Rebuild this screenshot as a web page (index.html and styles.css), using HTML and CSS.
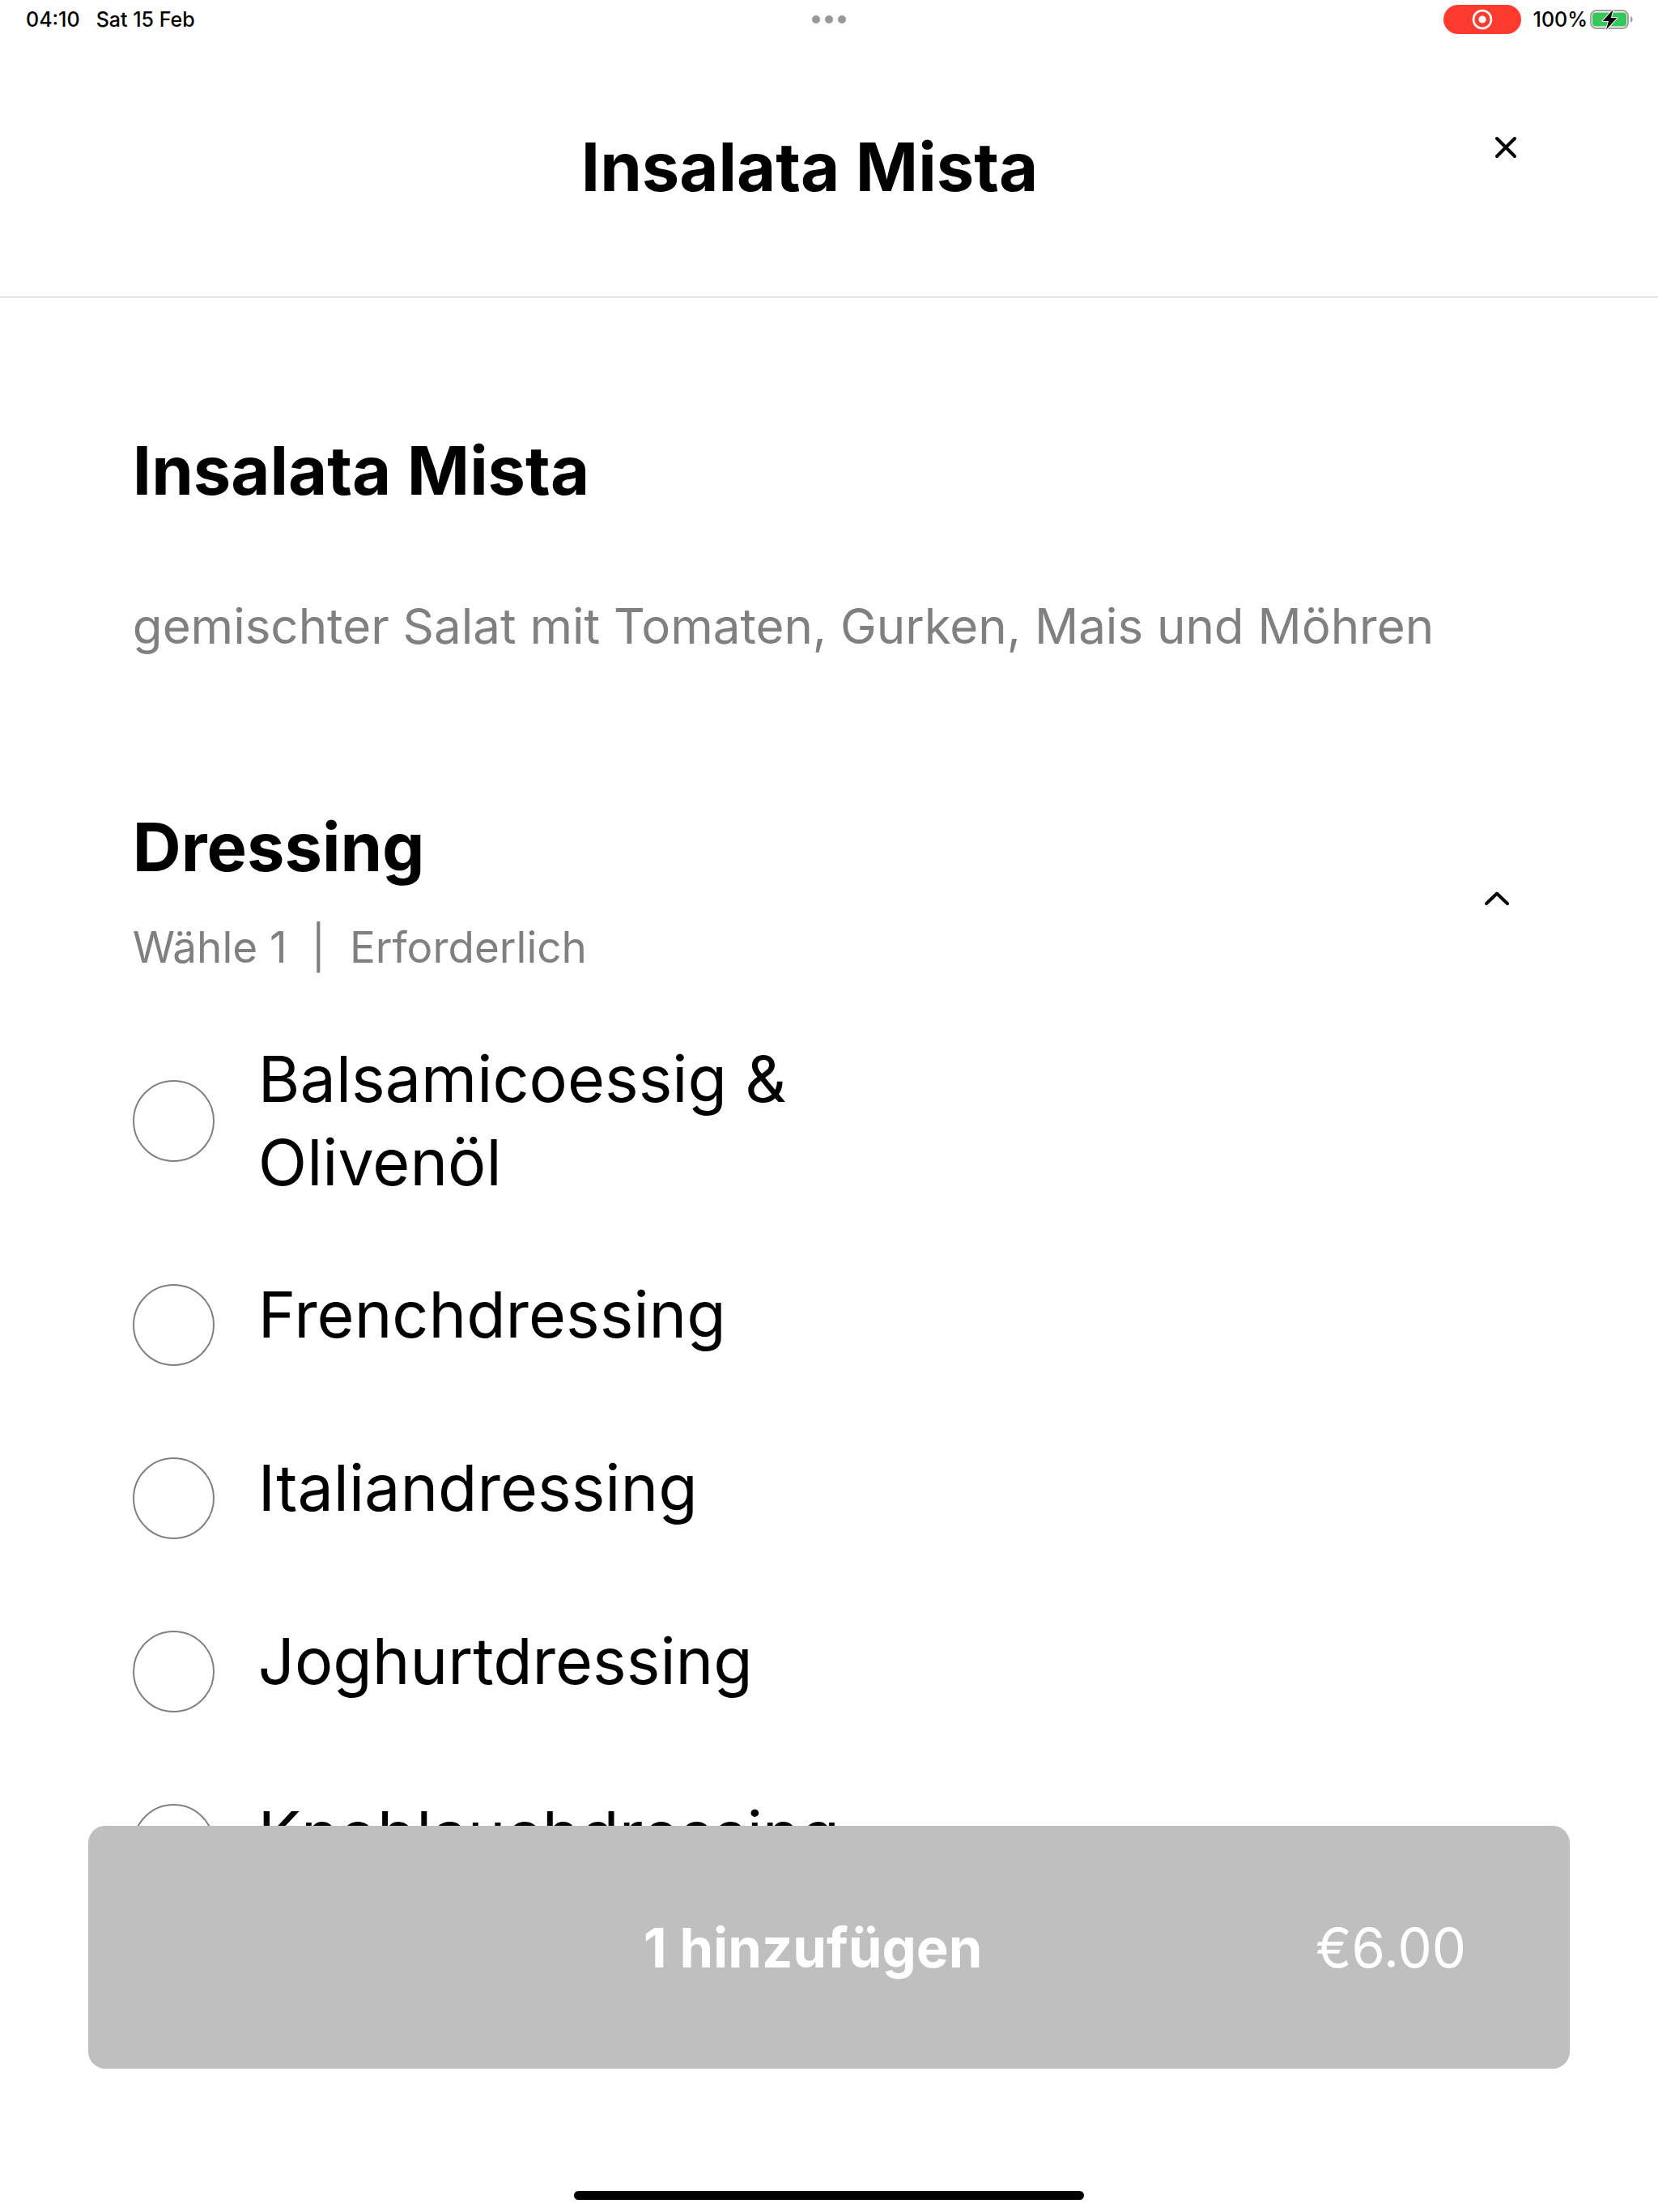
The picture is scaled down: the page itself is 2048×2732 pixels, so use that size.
FILE: index.html
```html
<!DOCTYPE html>
<html lang="de">
<head>
    <meta charset="UTF-8">
    <meta name="viewport" content="width=device-width, initial-scale=1.0">
    <title>Insalata Mista</title>
    <link rel="stylesheet" href="styles.css">
</head>
<body>
    <div class="status-bar">
        <div class="status-left">
            <span>04:10</span>
            <span>Sat 15 Feb</span>
        </div>
        <div class="status-dots">
            <i></i><i></i><i></i>
        </div>
        <div class="status-right">
            <span class="recording">
                <svg width="26" height="26" viewBox="0 0 26 26">
                    <circle cx="13" cy="13" r="11" fill="none" stroke="#fff" stroke-width="2.6"/>
                    <circle cx="13" cy="13" r="4.6" fill="#fff"/>
                </svg>
            </span>
            <span>100%</span>
            <svg class="battery" width="54" height="26" viewBox="0 0 54 26">
                <rect x="1" y="2" width="46" height="22" rx="7" fill="none" stroke="#a0a0a0" stroke-width="2"/>
                <rect x="3" y="4.5" width="42" height="17" rx="4" fill="#34c759"/>
                <path d="M50 9v8c1.7-.7 2.6-2.2 2.6-4s-.9-3.3-2.6-4z" fill="#a0a0a0"/>
                <path d="M28.5 1 15.500 15h7.500l-3 10.500L33.500 11h-7.700z" fill="#000" stroke="#fff" stroke-width="2" stroke-linejoin="round" paint-order="stroke"/>
            </svg>
        </div>
    </div>

    <header class="header">
        <h1>Insalata Mista</h1>
        <button class="icon-button close" type="button" aria-label="Schließen">
            <svg width="28" height="28" viewBox="0 0 28 28">
                <path d="M3 3l22 22M25 3L3 25"/>
            </svg>
        </button>
    </header>

    <main class="content">
        <h2>Insalata Mista</h2>
        <p class="description">gemischter Salat mit Tomaten, Gurken, Mais und Möhren</p>

        <div class="group-header">
            <div>
                <h2 id="group-title">Dressing</h2>
                <p class="hint">Wähle 1&nbsp; |&nbsp; Erforderlich</p>
            </div>
            <button class="icon-button toggle" type="button" aria-label="Dressing einklappen">
                <svg width="30" height="18" viewBox="0 0 30 18">
                    <path d="M2 15L15 2.5L28 15"/>
                </svg>
            </button>
        </div>

        <div class="options" role="radiogroup" aria-labelledby="group-title">
            <label class="option">
                <input type="radio" name="dressing">
                <span>Balsamicoessig &amp; Olivenöl</span>
            </label>
            <label class="option">
                <input type="radio" name="dressing">
                <span>Frenchdressing</span>
            </label>
            <label class="option">
                <input type="radio" name="dressing">
                <span>Italiandressing</span>
            </label>
            <label class="option">
                <input type="radio" name="dressing">
                <span>Joghurtdressing</span>
            </label>
            <label class="option">
                <input type="radio" name="dressing">
                <span>Knoblauchdressing</span>
            </label>
        </div>
    </main>

    <footer class="footer">
        <button class="add-button" type="button">
            <span class="add-label">1 hinzufügen</span>
            <span class="add-price">€6.00</span>
        </button>
        <div class="home-indicator"></div>
    </footer>
</body>
</html>
```
FILE: styles.css
```css
* {
    box-sizing: border-box;
}

body {
    margin: 0;
    font-family: Inter, "Liberation Sans", sans-serif;
    background: #fff;
    color: #000;
}

h1, h2, p {
    margin: 0;
}

h1, h2 {
    font-size: 83px;
    line-height: 104px;
    font-weight: 700;
}

/* Status bar */
.status-bar {
    display: grid;
    grid-template-columns: 1fr auto 1fr;
    align-items: center;
    height: 48px;
    padding: 0 30px;
    font-size: 25px;
    font-weight: 500;
}

.status-left {
    display: flex;
    gap: 20px;
    padding-left: 2px;
}

.status-dots {
    display: flex;
    gap: 6px;
}

.status-dots i {
    width: 10px;
    height: 10px;
    border-radius: 50%;
    background: #999;
}

.status-right {
    display: flex;
    justify-content: flex-end;
    align-items: center;
}

.recording {
    display: flex;
    justify-content: center;
    align-items: center;
    width: 96px;
    height: 36px;
    margin-right: 15px;
    border-radius: 18px;
    background: #ff3b30;
}

.battery {
    margin-left: 3px;
}

/* Header */
.header {
    display: flex;
    align-items: flex-start;
    height: 320px;
    padding: 106px 8% 0;
    border-bottom: 2px solid #e5e5e5;
}

.header h1 {
    flex: 1;
    text-align: center;
}

.icon-button {
    display: flex;
    justify-content: center;
    align-items: center;
    height: 56px;
    padding: 0;
    border: none;
    background: none;
    cursor: pointer;
}

.icon-button path {
    fill: none;
    stroke: #000;
    stroke-width: 4;
    stroke-linecap: round;
    stroke-linejoin: round;
}

.close {
    width: 48px;
}

.toggle {
    width: 70px;
    margin-top: 20px;
}

/* Content */
.content {
    padding: 161px 8% 380px;
}

.description {
    margin-top: 100px;
    font-size: 60px;
    line-height: 80px;
    color: #808080;
}

.group-header {
    display: flex;
    justify-content: space-between;
    align-items: center;
    margin-top: 181px;
}

.hint {
    margin-top: 36px;
    font-size: 53px;
    line-height: 72px;
    color: #808080;
}

.options {
    display: flex;
    flex-direction: column;
    gap: 85px;
    margin-top: 75px;
}

.option {
    display: flex;
    align-items: center;
    gap: 54px;
    min-height: 129px;
    cursor: pointer;
}

.option input {
    appearance: none;
    flex: none;
    width: 101px;
    height: 101px;
    margin: 0;
    border: 2px solid #808080;
    border-radius: 50%;
}

.option input:checked {
    border-width: 24px;
    border-color: #000;
}

.option span {
    align-self: flex-start;
    max-width: 820px;
    font-size: 79px;
    line-height: 103px;
}

/* Bottom button */
.footer {
    position: fixed;
    left: 0;
    right: 0;
    bottom: 0;
    padding: 0 109px 15px;
}

.add-button {
    display: grid;
    grid-template-columns: 1fr auto 1fr;
    align-items: center;
    width: 100%;
    height: 300px;
    padding: 0 128px 0 88px;
    border: none;
    border-radius: 21px;
    background: #bfbfbf;
    color: #fff;
    font-family: inherit;
    font-size: 67px;
    cursor: pointer;
}

.add-label {
    grid-column: 2;
    font-weight: 700;
}

.add-price {
    text-align: right;
}

.home-indicator {
    width: 630px;
    max-width: 40%;
    height: 11px;
    margin: 151px auto 0;
    border-radius: 6px;
    background: #000;
}
```
